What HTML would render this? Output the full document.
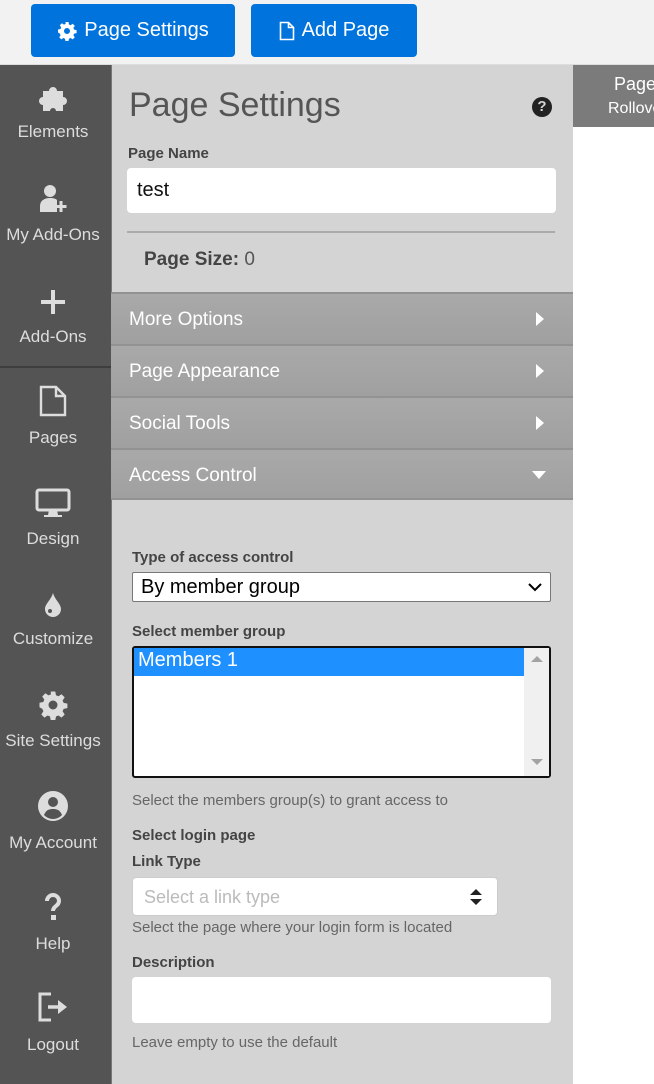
<!DOCTYPE html>
<html><head><meta charset="utf-8"><style>
*{box-sizing:border-box;margin:0;padding:0}
body{width:654px;height:1084px;overflow:hidden;position:relative;background:#fff;font-family:"Liberation Sans",sans-serif}
.a{position:absolute}
#top{left:0;top:0;width:654px;height:65px;background:#f2f2f2;border-bottom:1px solid #ddd}
.btn{top:4px;height:53px;background:#0073dd;border-radius:4px;color:#fff;font-size:20px;display:flex;align-items:center;justify-content:center;gap:7px}
#side{left:0;top:65px;width:111px;height:1019px;background:#545454}
.it{left:0;width:106px;text-align:center;color:#ddd;font-size:17px}
.it svg{display:block;margin:0 auto 11px}
#panel{left:111px;top:65px;width:462px;height:1019px;background:#d4d4d4;border-left:1px solid #777}
.lbl{font-size:15px;font-weight:bold;color:#444}
.hlp{font-size:15px;color:#666}
.acc{left:111px;width:462px;height:52px;background:linear-gradient(#a9a9a9,#a0a0a0);border-top:2px solid #929292;color:#fff;font-size:19px;padding:15px 0 0 18px}
.acc svg{position:absolute;right:28px;top:17px}
</style></head><body>
<div id="top" class="a"></div>
<div class="a btn" style="left:31px;width:204px"><svg width="20" height="20" viewBox="0 0 20 20"><path fill="#fff" d="M8.5 1h3l.5 2.5 1.6.7 2.1-1.4 2.1 2.1-1.4 2.1.7 1.6 2.5.5v3l-2.5.5-.7 1.6 1.4 2.1-2.1 2.1-2.1-1.4-1.6.7-.5 2.5h-3l-.5-2.5-1.6-.7-2.1 1.4-2.1-2.1 1.4-2.1-.7-1.6L1 11.5v-3l2.5-.5.7-1.6-1.4-2.1 2.1-2.1 2.1 1.4 1.6-.7zM10 7a3 3 0 100 6 3 3 0 000-6z"/></svg>Page Settings</div>
<div class="a btn" style="left:251px;width:166px"><svg width="16" height="20" viewBox="0 0 16 20"><path fill="none" stroke="#fff" stroke-width="1.6" d="M1.5 1.5h8l5 5v12h-13zM9.5 1.5v5h5"/></svg>Add Page</div>
<div id="side" class="a"></div>
<div class="a" style="left:0;top:366px;width:111px;height:2px;background:#3e3e3e"></div>
<div class="a it" style="top:87px"><svg width="40" height="24" viewBox="0 0 40 24"><path fill="#ddd" d="M10 4h6a4 4 0 118 0h6v6a4 4 0 110 8v6h-7a3 3 0 10-6 0h-7v-6a4 4 0 110-8z"/></svg>Elements</div>
<div class="a it" style="top:184px"><svg width="32" height="30" viewBox="0 0 32 30"><circle cx="13" cy="7" r="6" fill="#ddd"/><path fill="#ddd" d="M3 28v-6c0-5 4-8 10-8 4 0 6 1 7 2v12z"/><path stroke="#ddd" stroke-width="3" d="M24 17v11M18.5 22.5h11"/></svg>My Add-Ons</div>
<div class="a it" style="top:288px"><svg width="28" height="28" viewBox="0 0 28 28"><path stroke="#ddd" stroke-width="4" d="M14 2v24M2 14h24"/></svg>Add-Ons</div>
<div class="a it" style="top:385px"><svg width="28" height="32" viewBox="0 0 28 32"><path fill="none" stroke="#ddd" stroke-width="2.4" d="M2 2h15l9 9v19H2zM17 2v9h9"/></svg>Pages</div>
<div class="a it" style="top:488px"><svg width="36" height="30" viewBox="0 0 36 30"><rect x="2" y="2" width="32" height="20" rx="2" fill="none" stroke="#ddd" stroke-width="3"/><path fill="#ddd" d="M14 22h8l1 5h4v2H9v-2h4z"/></svg>Design</div>
<div class="a it" style="top:592px"><svg width="20" height="26" viewBox="0 0 20 26"><path fill="#ddd" d="M10 1C8 8 2 12 2 17a8 8 0 0016 0c0-5-6-9-8-16z"/><circle cx="7" cy="19" r="2" fill="#545454"/></svg>Customize</div>
<div class="a it" style="top:690px"><svg width="30" height="30" viewBox="0 0 20 20"><path fill="#ddd" d="M8.5 1h3l.5 2.5 1.6.7 2.1-1.4 2.1 2.1-1.4 2.1.7 1.6 2.5.5v3l-2.5.5-.7 1.6 1.4 2.1-2.1 2.1-2.1-1.4-1.6.7-.5 2.5h-3l-.5-2.5-1.6-.7-2.1 1.4-2.1-2.1 1.4-2.1-.7-1.6L1 11.5v-3l2.5-.5.7-1.6-1.4-2.1 2.1-2.1 2.1 1.4 1.6-.7zM10 7a3 3 0 100 6 3 3 0 000-6z"/></svg>Site Settings</div>
<div class="a it" style="top:790px"><svg width="32" height="32" viewBox="0 0 32 32"><circle cx="16" cy="16" r="15" fill="#ddd"/><circle cx="16" cy="12" r="5" fill="#545454"/><path fill="#545454" d="M7 25c2-5 5-6 9-6s7 1 9 6c-2 2-5 4-9 4s-7-2-9-4z"/></svg>My Account</div>
<div class="a it" style="top:893px"><svg width="20" height="30" viewBox="0 0 20 30"><path fill="none" stroke="#ddd" stroke-width="4" d="M4 8a6 6 0 1112 0c0 5-6 5-6 10"/><rect x="8" y="22" width="5" height="5" fill="#ddd"/></svg>Help</div>
<div class="a it" style="top:990px"><svg width="32" height="34" viewBox="0 0 32 34"><path fill="none" stroke="#ddd" stroke-width="3" d="M14 4H3v26h11"/><path stroke="#ddd" stroke-width="3.5" d="M11 17h13"/><path fill="#ddd" d="M21 10l9 7-9 7z"/></svg>Logout</div>
<div id="panel" class="a"></div>
<div class="a" style="left:129px;top:86px;font-size:34px;color:#555">Page Settings</div>
<div class="a" style="left:532px;top:97px;width:20px;height:20px;border-radius:50%;background:#222;color:#d4d4d4;font-size:15px;font-weight:bold;text-align:center;line-height:20px">?</div>
<div class="a lbl" style="left:128px;top:145px">Page Name</div>
<div class="a" style="left:127px;top:168px;width:429px;height:45px;background:#fff;border-radius:4px;font-size:20px;padding:11px 10px;color:#111">test</div>
<div class="a" style="left:127px;top:231px;width:428px;height:2px;background:#aaa"></div>
<div class="a" style="left:144px;top:249px;font-size:19px;color:#555"><b style="color:#444">Page Size:</b> 0</div>
<div class="a acc" style="top:292px">More Options<svg width="10" height="16"><path d="M1 1l8 7-8 7z" fill="#fff"/></svg></div>
<div class="a acc" style="top:344px">Page Appearance<svg width="10" height="16"><path d="M1 1l8 7-8 7z" fill="#fff"/></svg></div>
<div class="a acc" style="top:396px">Social Tools<svg width="10" height="16"><path d="M1 1l8 7-8 7z" fill="#fff"/></svg></div>
<div class="a acc" style="top:448px;border-bottom:2px solid #929292">Access Control<svg width="16" height="10" style="top:20px;right:26px"><path d="M1 1h14l-7 8z" fill="#fff"/></svg></div>
<div class="a lbl" style="left:132px;top:549px">Type of access control</div>
<div class="a" style="left:132px;top:572px;width:419px;height:30px;background:#fff;border:1px solid #777;border-radius:2px;font-size:20px;padding:3px 8px;color:#000">By member group<svg class="a" style="right:8px;top:10px" width="14" height="9"><path d="M1 1l6 6 6-6" fill="none" stroke="#000" stroke-width="2"/></svg></div>
<div class="a lbl" style="left:132px;top:623px">Select member group</div>
<div class="a" style="left:132px;top:646px;width:419px;height:132px;background:#fff;border:2px solid #111;border-radius:3px"></div>
<div class="a" style="left:134px;top:648px;width:390px;height:28px;background:#1e90ff;color:#fff;font-size:20px;padding:1px 4px">Members 1</div>
<div class="a" style="left:524px;top:648px;width:25px;height:128px;background:#f0f0f0"></div>
<svg class="a" style="left:531px;top:655px" width="12" height="8"><path d="M0 7l6-6 6 6z" fill="#a3a3a3"/></svg>
<svg class="a" style="left:531px;top:758px" width="12" height="8"><path d="M0 1h12l-6 6z" fill="#a3a3a3"/></svg>
<div class="a hlp" style="left:132px;top:792px">Select the members group(s) to grant access to</div>
<div class="a lbl" style="left:132px;top:827px">Select login page</div>
<div class="a lbl" style="left:132px;top:853px">Link Type</div>
<div class="a" style="left:132px;top:877px;width:366px;height:39px;background:#fff;border:1px solid #ccc;border-radius:4px;font-size:18px;color:#bbb;padding:9px 11px">Select a link type<svg class="a" style="right:14px;top:10px" width="14" height="18"><path d="M1 7l6-6 6 6zM1 11h12l-6 6z" fill="#222"/></svg></div>
<div class="a hlp" style="left:132px;top:919px">Select the page where your login form is located</div>
<div class="a lbl" style="left:132px;top:954px">Description</div>
<div class="a" style="left:132px;top:977px;width:419px;height:46px;background:#fff;border-radius:4px"></div>
<div class="a hlp" style="left:132px;top:1034px">Leave empty to use the default</div>
<div class="a" style="left:573px;top:65px;width:81px;height:62px;background:#7b7b7b;color:#fff;overflow:hidden;white-space:nowrap">
<div class="a" style="left:41px;top:9px;font-size:18px">Page</div>
<div class="a" style="left:35px;top:35px;font-size:16px">Rollover</div></div>
</body></html>
